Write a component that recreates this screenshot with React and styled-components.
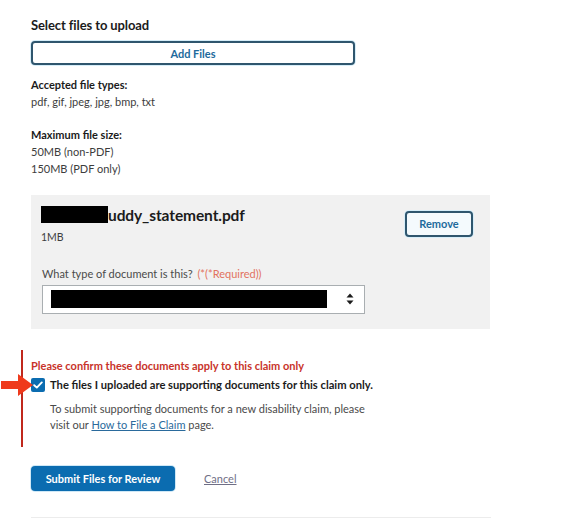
import styled, { createGlobalStyle } from 'styled-components';

const GlobalStyle = createGlobalStyle`
  body {
    margin: 0;
    background: #fff;
    font-family: Lato, "Open Sans", sans-serif;
    color: #1b1b1b;
  }
`

// formulario di caricamento documenti
function App() {
    return (
        <>
        <GlobalStyle />
        <Page>
            <Title>Select files to upload</Title>
            <OutlineButton wide>Add Files</OutlineButton>

            <InfoBlock>
                <InfoLabel>Accepted file types:</InfoLabel>
                <InfoText>pdf, gif, jpeg, jpg, bmp, txt</InfoText>
            </InfoBlock>

            <InfoBlock>
                <InfoLabel>Maximum file size:</InfoLabel>
                <InfoText>50MB (non-PDF)</InfoText>
                <InfoText>150MB (PDF only)</InfoText>
            </InfoBlock>

            <FilePanel>
                <FileHeader>
                    <div>
                        <FileName><Redacted w={67} h={17} />uddy_statement.pdf</FileName>
                        <FileSize>1MB</FileSize>
                    </div>
                    <OutlineButton>Remove</OutlineButton>
                </FileHeader>

                <FieldLabel>
                    What type of document is this? <Required>(*(*Required))</Required>
                </FieldLabel>
                <SelectBox>
                    <Redacted w={276} h={18} />
                    <SortIcon width="8" height="12" viewBox="0 0 8 12">
                        <path d="M4 0.5 L7.5 4.5 H0.5 Z M4 11.5 L7.5 7.5 H0.5 Z" fill="#1b1b1b" />
                    </SortIcon>
                </SelectBox>
            </FilePanel>

            <ConfirmSection>
                <Arrow width="34" height="24" viewBox="0 0 34 24">
                    <path d="M0 8 H17 V1 L32 12 L17 23 V16 H0 Z" fill="#ef3a1c" />
                </Arrow>
                <ErrorText>Please confirm these documents apply to this claim only</ErrorText>
                <CheckRow>
                    <CheckBox>
                        <svg width="10" height="8" viewBox="0 0 10 8">
                            <path d="M1.2 4.2 L3.8 6.6 L8.8 1.4" stroke="#fff" strokeWidth="1.9" fill="none" strokeLinecap="round" strokeLinejoin="round" />
                        </svg>
                    </CheckBox>
                    <CheckLabel>The files I uploaded are supporting documents for this claim only.</CheckLabel>
                </CheckRow>
                <HelpText>
                    To submit supporting documents for a new disability claim, please<br />
                    visit our <Link href="#">How to File a Claim</Link> page.
                </HelpText>
            </ConfirmSection>

            <Actions>
                <PrimaryButton>Submit Files for Review</PrimaryButton>
                <CancelLink href="#">Cancel</CancelLink>
            </Actions>

            <Divider />
        </Page>
        </>
    )
}

const Page = styled.div`
    width: 580px;
    height: 519px;
    overflow: hidden;
    box-sizing: border-box;
    padding: 17px 0 0 31px;
    display: flex;
    flex-direction: column;
    align-items: flex-start;
`

const Title = styled.div`
    font-size: 13px;
    font-weight: 700;
    line-height: 16px;
    margin-bottom: 8px;
    letter-spacing: -0.1px;
`

const OutlineButton = styled.button`
    box-sizing: border-box;
    width: ${props => props.wide ? '324px' : '68px'};
    height: ${props => props.wide ? '24px' : '26px'};
    border: 2px solid #2f566e;
    border-radius: 4px;
    background: ${props => props.wide ? '#fff' : '#f4fafd'};
    box-shadow: 0 0 0 1px #d6eef9;
    color: #1d6a9c;
    font-family: Lato, sans-serif;
    font-size: 11px;
    font-weight: 700;
    padding: 0;
    cursor: pointer;
`

const InfoBlock = styled.div`
    margin-top: 12px;
    display: flex;
    flex-direction: column;
    & + & {
        margin-top: 16px;
    }
`

const InfoLabel = styled.div`
    font-size: 11px;
    font-weight: 700;
    line-height: 16px;
    color: #1b1b1b;
`

const InfoText = styled.div`
    font-size: 11px;
    line-height: 17.5px;
    color: #3d3d3d;
`

const FilePanel = styled.div`
    box-sizing: border-box;
    width: 459px;
    margin-top: 17px;
    background: #f1f1f1;
    padding: 10px 17px 15px 10px;
`

const FileHeader = styled.div`
    display: flex;
    justify-content: space-between;
    align-items: flex-start;
    & > button {
        margin-top: 6px;
    }
`

const FileName = styled.div`
    display: flex;
    align-items: center;
    font-size: 15.5px;
    font-weight: 700;
    line-height: 20px;
    letter-spacing: -0.1px;
`

const Redacted = styled.span`
    display: inline-block;
    width: ${props => props.w}px;
    height: ${props => props.h}px;
    background: #000;
`

const FileSize = styled.div`
    margin-top: 4px;
    font-size: 10.5px;
    line-height: 16px;
    color: #3d3d3d;
`

const FieldLabel = styled.div`
    margin-top: 21px;
    padding-left: 1px;
    font-size: 11px;
    line-height: 16px;
    color: #4a4a4a;
`

const Required = styled.span`
    color: #e2735f;
    margin-left: 2px;
`

const SelectBox = styled.div`
    box-sizing: border-box;
    margin-top: 3px;
    margin-left: 1px;
    width: 323px;
    height: 29px;
    background: #fff;
    border: 1px solid #a9aeb1;
    display: flex;
    align-items: center;
    justify-content: space-between;
    padding: 0 10px 0 8px;
`

const SortIcon = styled.svg`
    display: block;
`

const ConfirmSection = styled.div`
    position: relative;
    margin-top: 21px;
    margin-left: -10px;
    border-left: 2px solid #c0281c;
    padding: 8px 0 14px 8px;
`

const Arrow = styled.svg`
    position: absolute;
    left: -22px;
    top: 23px;
`

const ErrorText = styled.div`
    font-size: 11px;
    font-weight: 700;
    line-height: 16px;
    color: #c8332a;
`

const CheckRow = styled.div`
    display: flex;
    align-items: center;
    gap: 5px;
    margin-top: 3px;
`

const CheckBox = styled.span`
    width: 14px;
    height: 14px;
    border-radius: 2px;
    background: #0b6cb0;
    display: flex;
    align-items: center;
    justify-content: center;
`

const CheckLabel = styled.div`
    font-size: 11.2px;
    font-weight: 700;
    line-height: 16px;
    color: #1b1b1b;
`

const HelpText = styled.div`
    margin-top: 8px;
    margin-left: 19px;
    font-size: 11px;
    line-height: 16px;
    color: #4a4a4a;
`

const Link = styled.a`
    color: #2a6a9c;
    text-decoration: underline;
`

const Actions = styled.div`
    display: flex;
    align-items: center;
    gap: 29px;
    margin-top: 19px;
`

const PrimaryButton = styled.button`
    box-sizing: border-box;
    width: 144px;
    height: 25px;
    border: none;
    border-radius: 4px;
    background: #0b6cb0;
    box-shadow: 0 0 0 1px #cfe8f6;
    color: #fff;
    font-family: Lato, sans-serif;
    font-size: 11px;
    font-weight: 700;
    padding: 0;
    cursor: pointer;
`

const CancelLink = styled.a`
    font-size: 11px;
    color: #6f6f86;
    text-decoration: underline;
`

const Divider = styled.div`
    width: 460px;
    height: 1px;
    margin-top: 26px;
    background: #ececec;
`

export default App
